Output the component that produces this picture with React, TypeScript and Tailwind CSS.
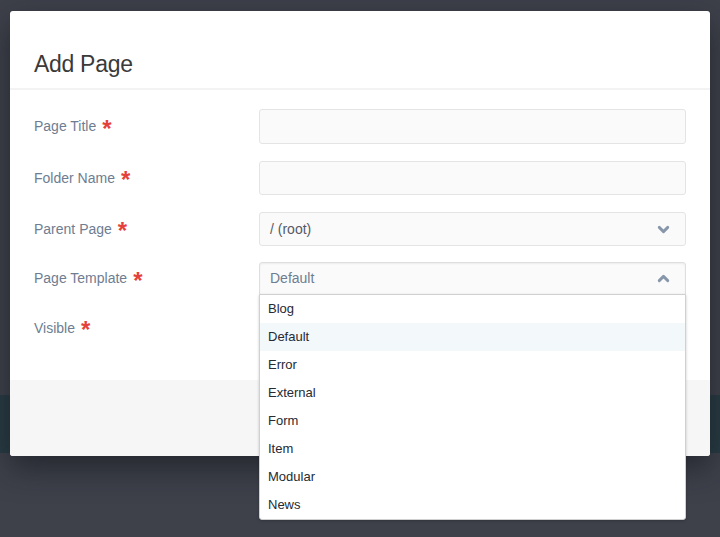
import { ChevronDown, ChevronUp } from 'lucide-react';

const TEMPLATES = ['Blog', 'Default', 'Error', 'External', 'Form', 'Item', 'Modular', 'News'];

function Label({ text }: { text: string }) {
  return (
    <label className="flex items-center text-[14px] text-[#6e7d91] w-[225px] shrink-0">
      {text}
      <span className="ml-[6px] text-[24px] font-bold leading-none text-[#e5413b] relative top-[2px]">*</span>
    </label>
  );
}

export default function App() {
  return (
    <div
      className="relative w-[720px] h-[537px] overflow-hidden bg-[#3e414a] pt-[11px] pl-[10px]"
      style={{ fontFamily: '"Liberation Sans", Arial, sans-serif' }}
    >
      <div className="absolute left-0 right-0 top-[395px] h-[58px] bg-[#283b43]" />
      <div className="relative w-[700px] bg-white rounded-[3px] shadow-[0_12px_30px_rgba(20,22,28,0.6)]">
        <div className="h-[79px] flex items-end px-[24px] pb-[12px] border-b-[2px] border-[#f3f3f3]">
          <h1 className="text-[23px] text-[#3a3a3a] leading-none tracking-[-0.3px]">Add Page</h1>
        </div>

        <div className="px-[24px] pt-[19px] pb-[35px] flex flex-col">
          <div className="flex items-center h-[35px] mb-[17px]">
            <Label text="Page Title" />
            <div className="flex-1 h-full bg-[#fafafa] border border-[#e4e4e4] rounded-[3px]" />
          </div>
          <div className="flex items-center h-[34px] mb-[17px]">
            <Label text="Folder Name" />
            <div className="flex-1 h-full bg-[#fafafa] border border-[#e4e4e4] rounded-[3px]" />
          </div>
          <div className="flex items-center h-[34px] mb-[16px]">
            <Label text="Parent Page" />
            <div className="flex-1 h-full bg-[#fafafa] border border-[#e4e4e4] rounded-[3px] flex items-center justify-between pl-[10px] pr-[13px] text-[14px] text-[#555b66]">
              <span>/ (root)</span>
              <ChevronDown size={17} strokeWidth={4} className="text-[#8796aa]" />
            </div>
          </div>
          <div className="flex items-center h-[33px] mb-[16px]">
            <Label text="Page Template" />
            <div className="relative flex-1 h-full">
              <div className="h-full bg-[#fafafa] border border-[#dedede] rounded-t-[3px] shadow-[inset_0_1px_2px_rgba(0,0,0,0.06)] flex items-center justify-between pl-[10px] pr-[13px] text-[14px] text-[#6e7d91]">
                <span>Default</span>
                <ChevronUp size={17} strokeWidth={4} className="text-[#8796aa]" />
              </div>
              <ul className="absolute left-0 right-0 top-[32px] z-10 bg-white border border-[#d0d0d0] rounded-b-[3px] shadow-[0_1px_3px_rgba(0,0,0,0.2)]">
                {TEMPLATES.map((t) => (
                  <li
                    key={t}
                    className={`h-[28px] flex items-center pl-[8px] text-[13px] text-[#252a33] ${t === 'Default' ? 'bg-[#f3f8fb]' : ''}`}
                  >
                    {t}
                  </li>
                ))}
              </ul>
            </div>
          </div>
          <div className="flex items-center h-[34px]">
            <Label text="Visible" />
          </div>
        </div>

        <div className="h-[76px] bg-[#f6f6f6] rounded-b-[3px]" />
      </div>
    </div>
  );
}
